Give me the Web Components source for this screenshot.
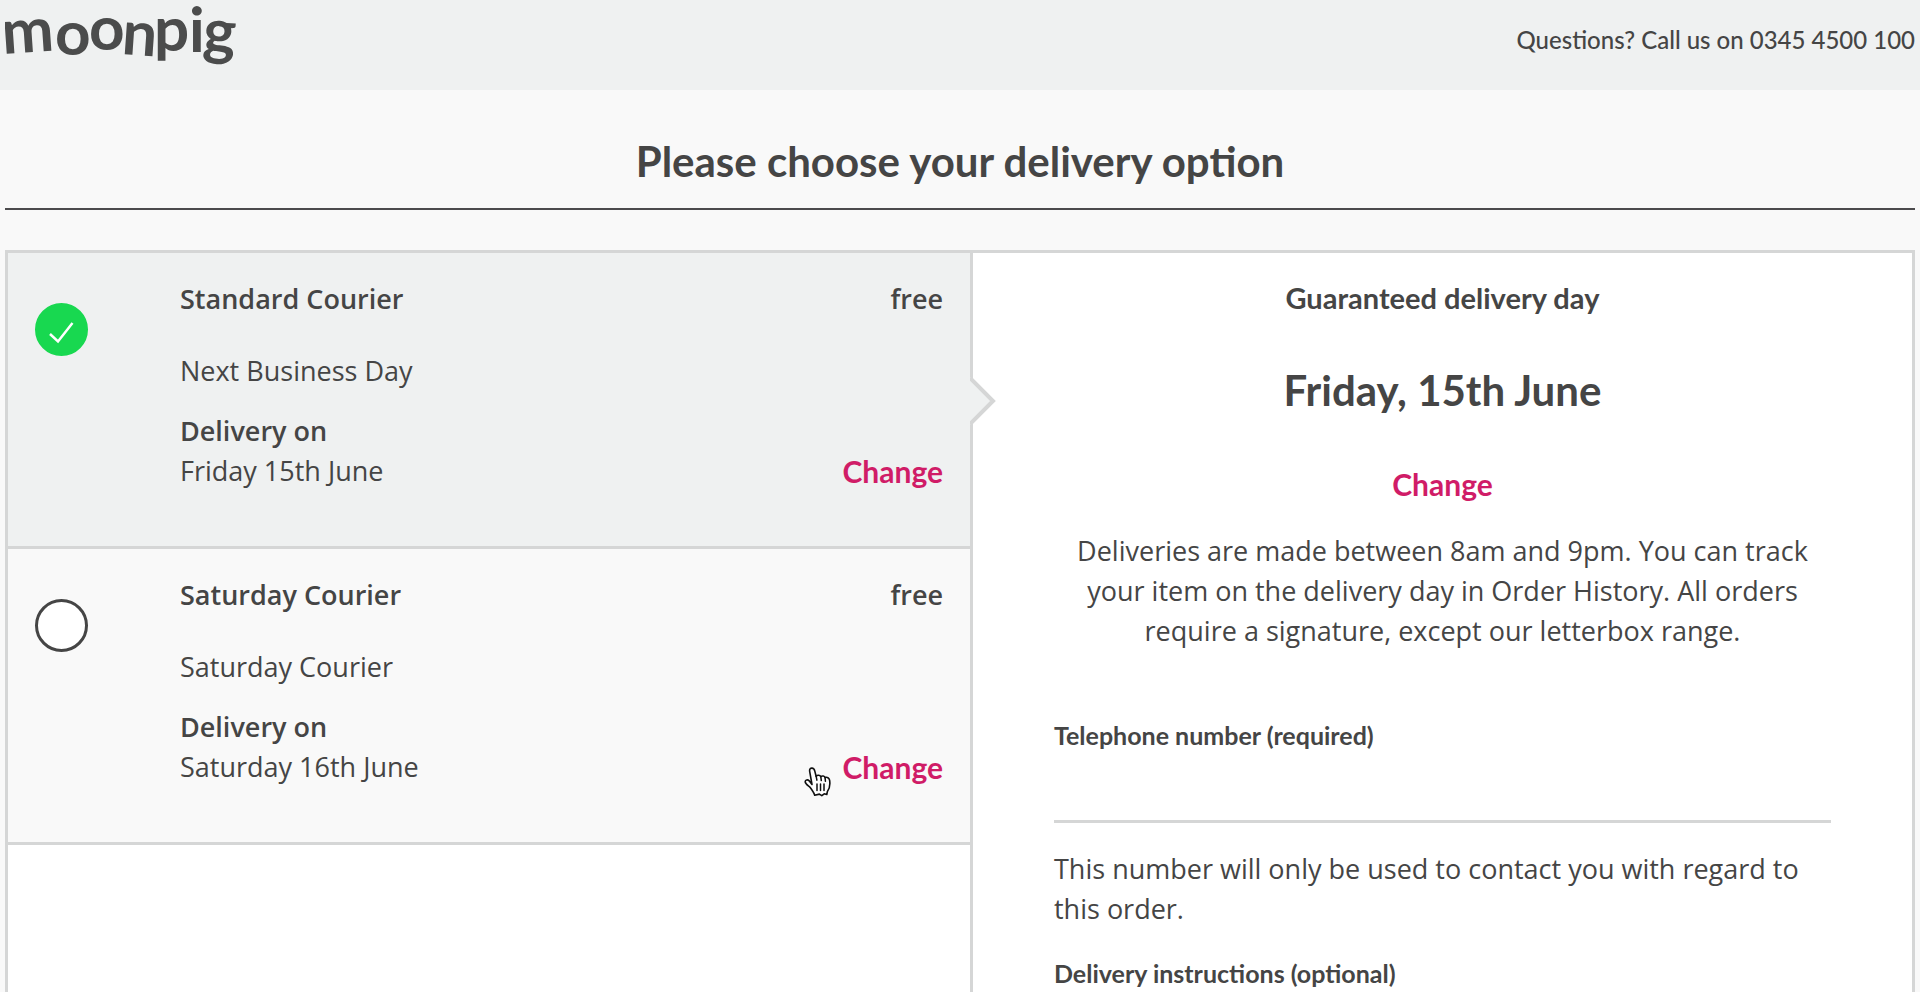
<!DOCTYPE html>
<html lang="en">
<head>
<meta charset="utf-8">
<meta name="viewport" content="width=device-width, initial-scale=1">
<title>Choose your delivery option</title>
<style>
  :root {
    --ink: #454545;
    --pink: #d01c67;
    --rule: #d5d6d6;
    --mist: #eff1f1;
    --paper: #f9f9f9;
    --display: Lato, "Open Sans", sans-serif;
    --text: "Open Sans", "Noto Sans", sans-serif;
  }
  body { margin: 0; background: var(--paper); color: var(--ink); font: 27px/40px var(--text); }
</style>
</head>
<body>
<checkout-page>
  <site-header slot="header">Questions? Call us on 0345 4500 100</site-header>
  <span slot="title">Please choose your delivery option</span>
  <delivery-option slot="options" name="Standard Courier" price="free" selected>
    <span slot="service">Next Business Day</span>
    <span slot="date">Friday 15th June</span>
  </delivery-option>
  <delivery-option slot="options" name="Saturday Courier" price="free">
    <span slot="service">Saturday Courier</span>
    <span slot="date">Saturday 16th June</span>
    <hand-pointer slot="pointer"></hand-pointer>
  </delivery-option>
  <delivery-details slot="details">
    <span slot="day">Friday, 15th June</span>
    <span slot="info">Deliveries are made between 8am and 9pm. You can track your item on the delivery day in Order History. All orders require a signature, except our letterbox range.</span>
  </delivery-details>
</checkout-page>

<script>
const define = (name, html, setup) => customElements.define(name, class extends HTMLElement {
  connectedCallback() {
    if (this.shadowRoot) return;
    this.attachShadow({ mode: "open" }).innerHTML = html;
    if (setup) setup(this, this.shadowRoot);
  }
});

define("moonpig-logo", `
  <style>
    :host { display: block; }
    svg { display: block; }
    text { font: 700 62px var(--display); fill: #4b4c4c; }
  </style>
  <svg width="234" height="72" role="img" aria-label="moonpig">
    <text x="-2 50 84 116 149 184 197" y="54 55 50 54 51 52 52" rotate="-4 0 0 4 0 0 4">moonpig</text>
  </svg>`);

define("site-header", `
  <style>
    :host { display: flex; justify-content: space-between; align-items: flex-start; height: 90px;
            padding: 0 5px; background: var(--mist); font: 500 24px/32px var(--display); }
    a { text-decoration: none; }
    p { margin: 24px 0 0; }
  </style>
  <a href="#" aria-label="moonpig home"><moonpig-logo></moonpig-logo></a>
  <p><slot></slot></p>`);

define("change-link", `
  <style>
    :host { display: inline-block; position: relative; }
    a { display: block; color: var(--pink); font: 700 30px/40px var(--display); text-decoration: none; }
  </style>
  <a href="#">Change</a><slot></slot>`);

define("hand-pointer", `
  <style>
    :host { display: block; position: absolute; right: 100%; top: 20px; margin-right: 10px; pointer-events: none; }
    svg { display: block; }
  </style>
  <svg width="28" height="30" viewBox="0 0 28 30" aria-hidden="true">
    <path d="M8 17.500 5.800 5.200C5.300 2.600 5.800 1.300 7.600 1.100c1.700-.2 2.700.8 3.200 3l1.300 5.100c1.400-1.500 3.800-1.300 4.700.4 1.500-1.100 3.600-.6 4.300 1 2-.9 4 .3 4.500 2.600.8 5.100-.1 8.500-2.200 11.200l-.6 3.100-2.600-.7-2.400 1.900-2.400-1.600-4.700 1.100c-.9-3-2.900-5.500-5-8.300C4.100 18.600 1.100 17 1.200 14.700c.2-1.900 2.400-2.400 4-.9Z" fill="#fff" stroke="#111" stroke-width="1.600" stroke-linejoin="round"/>
    <path d="m12.100 9.200.8 4M16.800 9.600l.5 4M21.100 10.600l.3 3.600M13 17v6.500M16.500 17v6.500M20 17v6.500" fill="none" stroke="#111" stroke-width="1.500" stroke-linecap="round"/>
  </svg>`);

define("delivery-option", `
  <style>
    :host { display: block; position: relative; border-bottom: 3px solid var(--rule); background: var(--paper); }
    :host([selected]) { background: var(--mist); }
    .card { display: grid; grid-template-columns: 145px 1fr auto; padding: 26px 27px 55px; }
    .pick { display: grid; align-self: start; justify-self: start; margin-top: 24px; }
    .pick > * { grid-area: 1 / 1; }
    input { appearance: none; box-sizing: border-box; width: 53px; height: 53px; margin: 0;
            border: 3px solid var(--ink); border-radius: 50%; background: #fff; }
    input:checked { border-color: #18d850; background: #18d850; }
    svg { display: none; pointer-events: none; }
    input:checked + svg { display: block; }
    label, .price { font-weight: 600; }
    h2, p { margin: 0; font-size: inherit; line-height: inherit; font-weight: inherit; }
    h2 { margin-bottom: 32px; }
    .service { margin-bottom: 20px; }
    strong { font-weight: 600; }
    .side { display: flex; flex-direction: column; justify-content: space-between; align-items: flex-end; }
    .arrow { display: none; }
    :host([selected]) .arrow { display: block; position: absolute; left: 100%; top: 50%; z-index: 1; margin-top: -24px; }
  </style>
  <div class="card">
    <div class="pick">
      <input type="radio" id="pick">
      <svg width="53" height="53" viewBox="0 0 53 53" aria-hidden="true"><path d="m15 31 8 7.500L37.500 20" fill="none" stroke="#fff" stroke-width="2.500"/></svg>
    </div>
    <div>
      <h2><label for="pick"></label></h2>
      <p class="service"><slot name="service"></slot></p>
      <p><strong>Delivery on</strong></p>
      <p><slot name="date"></slot></p>
    </div>
    <div class="side">
      <span class="price"></span>
      <change-link><slot name="pointer"></slot></change-link>
    </div>
  </div>
  <svg class="arrow" width="28" height="50" viewBox="0 0 28 50" aria-hidden="true">
    <path d="M0 1v48l23-24Z" fill="#eff1f1"/>
    <path d="M0 2v0l23 23L0 48" fill="none" stroke="#d5d6d6" stroke-width="4"/>
  </svg>`,
  (host, root) => {
    root.querySelector("label").textContent = host.getAttribute("name");
    root.querySelector(".price").textContent = host.getAttribute("price");
    const input = root.querySelector("input");
    input.checked = host.hasAttribute("selected");
    input.addEventListener("change", () => {
      for (const option of host.parentElement.querySelectorAll("delivery-option")) {
        option.toggleAttribute("selected", option === host);
        option.shadowRoot.querySelector("input").checked = option === host;
      }
    });
  });

define("form-field", `
  <style>
    :host { display: block; }
    label { display: block; font: 700 25px/32px var(--display); }
    input, textarea { display: block; box-sizing: border-box; width: 100%; height: 72px; padding: 8px 0; border: 0;
            border-bottom: 3px solid var(--rule); background: none; color: inherit; font: inherit; resize: none; outline: 0; }
  </style>
  <label for="field"></label>`,
  (host, root) => {
    root.querySelector("label").textContent = host.getAttribute("label");
    const field = document.createElement(host.hasAttribute("multiline") ? "textarea" : "input");
    if (field.localName === "input") field.type = "tel";
    field.id = "field";
    root.append(field);
  });

define("delivery-details", `
  <style>
    :host { display: block; padding: 25px 81px 0; background: #fff; }
    h2, h3, p { margin: 0; }
    .top { text-align: center; }
    h3 { font: 700 29px/40px var(--display); }
    h2 { margin: 48px 0 50px; font: 700 42px/48px var(--display); }
    .info { margin: 25px 20px 68px; }
    .note { margin: 26px 0 28px; }
  </style>
  <div class="top">
    <h3>Guaranteed delivery day</h3>
    <h2><slot name="day"></slot></h2>
    <change-link></change-link>
    <p class="info"><slot name="info"></slot></p>
  </div>
  <form-field label="Telephone number (required)"></form-field>
  <p class="note">This number will only be used to contact you with regard to this order.</p>
  <form-field label="Delivery instructions (optional)" multiline></form-field>`);

define("checkout-page", `
  <style>
    :host { display: block; }
    main { padding: 0 5px; }
    h1 { margin: 0 0 40px; padding: 47px 0 23px; border-bottom: 2px solid #4c4b4d; text-align: center;
         font: 700 42px/48px var(--display); }
    .frame { display: grid; grid-template-columns: 965fr 939fr; border: 3px solid var(--rule); background: #fff; }
    .options { border-right: 3px solid var(--rule); }
  </style>
  <slot name="header"></slot>
  <main>
    <h1><slot name="title"></slot></h1>
    <div class="frame">
      <div class="options"><slot name="options"></slot></div>
      <slot name="details"></slot>
    </div>
  </main>`);
</script>
</body>
</html>
